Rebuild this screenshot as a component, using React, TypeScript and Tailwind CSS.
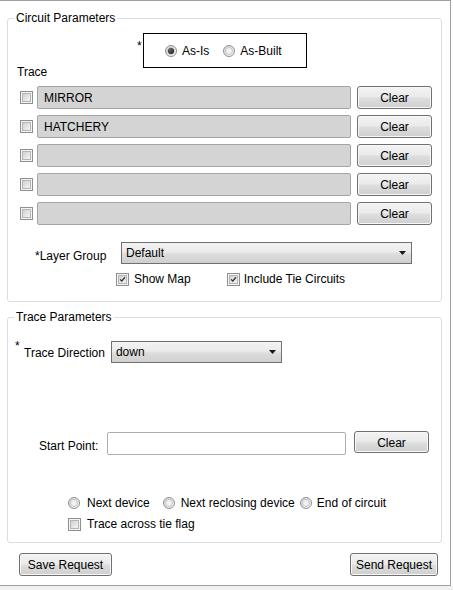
import React from "react";

const btnBg =
  "bg-[linear-gradient(#f3f3f3_0%,#ebebeb_45%,#dddddd_55%,#cfcfcf_100%)] border border-[#707070] rounded-[3px] shadow-[inset_0_0_0_1px_#f8f8f8]";

function Button({ label, w, h = 23, cls = "" }: { label: string; w: string; h?: number; cls?: string }) {
  return (
    <div
      className={`${btnBg} ${w} ${h === 22 ? "h-[22px]" : "h-[23px]"} flex items-center justify-center pt-[1px] text-[12px] leading-[14px] text-black ${cls}`}
    >
      {label}
    </div>
  );
}

function Checkbox({ checked = false }: { checked?: boolean }) {
  return (
    <div className="w-[13px] h-[13px] border border-[#8e8f8f] bg-[#f4f4f4] p-[1px] shrink-0">
      <div className="w-full h-full border border-[#b5b5b5] bg-[linear-gradient(135deg,#cfd1d4_0%,#f4f4f4_100%)] flex items-center justify-center">
        {checked && (
          <svg width="9" height="9" viewBox="0 0 9 9">
            <path d="M1.5 4.3 L3.6 6.6 L7.6 1.6" stroke="#2a2a2a" strokeWidth="1.6" fill="none" />
          </svg>
        )}
      </div>
    </div>
  );
}

function Radio({ checked = false }: { checked?: boolean }) {
  return (
    <div className="w-[12px] h-[12px] rounded-full border border-[#8e8f8f] bg-[linear-gradient(135deg,#d3d5d8_0%,#fafafa_100%)] flex items-center justify-center shrink-0">
      <div className="w-[8px] h-[8px] rounded-full border border-[#c4c4c4] bg-[#f2f2f2] flex items-center justify-center">
        {checked && <div className="w-[6px] h-[6px] rounded-full bg-[radial-gradient(circle_at_40%_35%,#6a6a6a_0%,#1a1a1a_80%)]" />}
      </div>
    </div>
  );
}

function Combo({ value, w }: { value: string; w: string }) {
  return (
    <div
      className={`${w} h-[22px] border border-[#707070] bg-[linear-gradient(#f3f3f3_0%,#ebebeb_45%,#dddddd_55%,#cfcfcf_100%)] flex items-center justify-between pl-[4px] pr-[5px] text-[12px] leading-[14px] text-black`}
    >
      <span>{value}</span>
      <svg width="7" height="4" viewBox="0 0 7 4">
        <path d="M0 0 L7 0 L3.5 4 Z" fill="#1a1a1a" />
      </svg>
    </div>
  );
}

function TraceRow({ value }: { value: string }) {
  return (
    <div className="flex items-center">
      <div className="ml-[12px]">
        <Checkbox />
      </div>
      <div className="ml-[4px] w-[314px] h-[23px] bg-[#d4d4d4] border border-[#a5a5a5] rounded-[2px] flex items-center pl-[6px] pt-[1px] text-[12px] leading-[14px] text-black">
        {value}
      </div>
      <Button label="Clear" w="w-[75px]" cls="ml-[6px]" />
    </div>
  );
}

export default function App() {
  return (
    <div className="w-[453px] h-[590px] bg-white font-['Liberation_Sans',Arial,sans-serif] text-[12px] leading-[14px] text-black">
      <div className="w-[451px] h-[586px] border-t border-r border-b border-[#a0a0a0] pl-[7px] pt-[10px] flex flex-col">
        {/* Circuit Parameters */}
        <fieldset className="w-[435px] border border-[#d5dfe5] rounded-[3px] pb-[15px]">
          <legend className="ml-[6px] px-[2px] leading-[14px]">Circuit Parameters</legend>
          <div className="flex mt-[8px] pl-[129px]">
            <span className="w-[6px] mt-[6px] leading-[14px]">*</span>
            <div className="w-[164px] h-[35px] border border-black flex items-center pl-[21px]">
              <Radio checked />
              <span className="ml-[5px]">As-Is</span>
              <div className="ml-[14px]">
                <Radio />
              </div>
              <span className="ml-[5px]">As-Built</span>
            </div>
          </div>
          <div className="-mt-[3px] pl-[9px]">Trace</div>
          <div className="mt-[7px] flex flex-col gap-[6px]">
            <TraceRow value="MIRROR" />
            <TraceRow value="HATCHERY" />
            <TraceRow value="" />
            <TraceRow value="" />
            <TraceRow value="" />
          </div>
          <div className="mt-[17px] flex items-start">
            <span className="ml-[27px] w-[86px] mt-[7px]">*Layer Group</span>
            <Combo value="Default" w="w-[291px]" />
          </div>
          <div className="mt-[8px] flex items-center">
            <div className="ml-[108px]">
              <Checkbox checked />
            </div>
            <span className="ml-[5px]">Show Map</span>
            <div className="ml-[36px]">
              <Checkbox checked />
            </div>
            <span className="ml-[4px]">Include Tie Circuits</span>
          </div>
        </fieldset>

        {/* Trace Parameters */}
        <fieldset className="mt-[8px] w-[435px] h-[233px] border border-[#d5dfe5] rounded-[3px]">
          <legend className="ml-[6px] px-[2px] leading-[14px]">Trace Parameters</legend>
          <div className="mt-[17px] flex items-start">
            <span className="ml-[7px] w-[9px] -mt-[2px]">*</span>
            <span className="mt-[5px]">Trace Direction</span>
            <div className="ml-[6px]">
              <Combo value="down" w="w-[171px]" />
            </div>
          </div>
          <div className="mt-[69px] flex items-start">
            <span className="ml-[31px] w-[68px] mt-[7px]">Start Point:</span>
            <div className="w-[239px] h-[23px] bg-white border border-[#abadb3] rounded-[2px]" />
            <div className="ml-[8px] -mt-[1px]">
              <Button label="Clear" w="w-[75px]" h={22} />
            </div>
          </div>
          <div className="mt-[41px] h-[14px] flex items-center">
            <div className="ml-[60px]">
              <Radio />
            </div>
            <span className="ml-[7px]">Next device</span>
            <div className="ml-[13px]">
              <Radio />
            </div>
            <span className="ml-[6px]">Next reclosing device</span>
            <div className="ml-[5px]">
              <Radio />
            </div>
            <span className="ml-[5px]">End of circuit</span>
          </div>
          <div className="mt-[7px] h-[14px] flex items-center">
            <div className="ml-[60px]">
              <Checkbox />
            </div>
            <span className="ml-[6px]">Trace across tie flag</span>
          </div>
        </fieldset>

        <div className="mt-[10px] flex justify-between pl-[12px] pr-[12px]">
          <Button label="Save Request" w="w-[93px]" />
          <Button label="Send Request" w="w-[88px]" />
        </div>
      </div>
      <div className="h-[4px] bg-[#f0f0f0]" />
    </div>
  );
}
